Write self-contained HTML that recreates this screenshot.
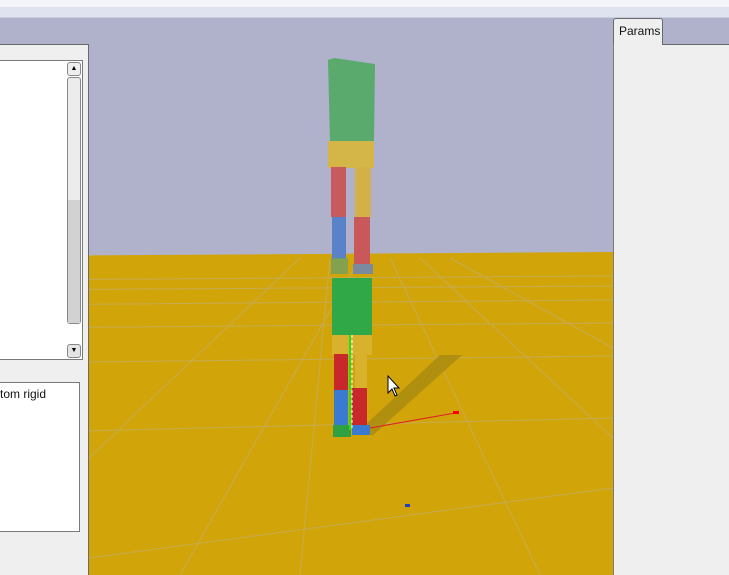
<!DOCTYPE html>
<html><head><style>
body{margin:0;width:729px;height:575px;overflow:hidden;position:relative;background:#b0b2cc;font-family:"Liberation Sans",sans-serif}
div{position:absolute;box-sizing:border-box}
</style></head><body>
<div style="left:0;top:0;width:729px;height:7px;background:#f3f5f9"></div>
<div style="left:0;top:7px;width:729px;height:11px;background:#dfe3ef;border-bottom:1px solid #c9cede"></div>
<svg style="position:absolute;left:0;top:18px" width="613" height="557">
<polygon points="0,238 613,234 613,557 0,557" fill="#d1a50a"/>
<g stroke="#c2ad70" stroke-width="1" opacity="0.7" fill="none">
<line x1="0" y1="262" x2="613" y2="258"/>
<line x1="0" y1="272" x2="613" y2="268"/>
<line x1="0" y1="287" x2="613" y2="282"/>
<line x1="0" y1="310" x2="613" y2="305"/>
<line x1="0" y1="345" x2="613" y2="338"/>
<line x1="0" y1="415" x2="613" y2="400"/>
<line x1="89" y1="540" x2="613" y2="470"/>
<line x1="330" y1="240" x2="300" y2="557"/>
<line x1="360" y1="240" x2="180" y2="557"/>
<line x1="390" y1="240" x2="540" y2="557"/>
<line x1="420" y1="240" x2="613" y2="420"/>
<line x1="300" y1="240" x2="89" y2="440"/>
<line x1="450" y1="240" x2="613" y2="330"/>
</g>
<polygon points="362,410 372,418 462,337 440,337" fill="#a88a10" opacity="0.8"/>
</svg>
<svg style="position:absolute;left:0;top:0" width="613" height="575">
<polygon points="328,60 334,58 375,64 374,141 330,141" fill="#5aaa6e"/>
<rect x="328" y="141" width="46" height="27" fill="#d4b548"/>
<rect x="331" y="167" width="15" height="50" fill="#c85a5e"/>
<rect x="355" y="167" width="16" height="50" fill="#d4b048"/>
<rect x="332" y="217" width="14" height="42" fill="#5a82c8"/>
<rect x="354" y="217" width="16" height="48" fill="#c8585a"/>
<rect x="331" y="258" width="17" height="16" fill="#70a060" opacity="0.8"/>
<rect x="353" y="264" width="20" height="10" fill="#7c8aa0"/>
<rect x="332" y="278" width="40" height="57" fill="#30a848"/>
<rect x="332" y="335" width="40" height="20" fill="#d8b22c"/>
<rect x="334" y="354" width="14" height="38" fill="#c8282a"/>
<rect x="355" y="354" width="12" height="38" fill="#d8b22c"/>
<rect x="334" y="390" width="14" height="38" fill="#3a7ad0"/>
<rect x="352" y="388" width="15" height="38" fill="#c8282a"/>
<rect x="333" y="425" width="18" height="12" fill="#30a040"/>
<rect x="352" y="425" width="18" height="10" fill="#3a7ad0"/>
<line x1="350" y1="335" x2="350" y2="430" stroke="#20e020" stroke-width="2"/>
<line x1="352" y1="335" x2="352" y2="430" stroke="#fff" stroke-width="1" stroke-dasharray="3,2"/>
<line x1="370" y1="428" x2="455" y2="413" stroke="#e02020" stroke-width="1"/>
<rect x="453" y="411" width="6" height="3" fill="#f00"/>
<rect x="405" y="504" width="5" height="3" fill="#2040c0"/>
<path d="M388,376 L388,393 L392,389 L395,396 L397,395 L394,388 L399,388 Z" fill="#fff" stroke="#000" stroke-width="1"/>
</svg>
<div style="left:0;top:44px;width:89px;height:531px;background:#efefef;border-right:1px solid #6a6a6a;border-top:1px solid #6a6a6a"></div>
<div style="left:0;top:60px;width:83px;height:300px;background:#fff;border:1px solid #7a7a7a;border-left:none"></div>
<div style="left:67px;top:62px;width:14px;height:14px;border:1px solid #888;border-radius:3px;background:#eee;font-size:7px;text-align:center;line-height:12px">▲</div>
<div style="left:67px;top:77px;width:14px;height:247px;border:1px solid #888;border-radius:3px;background:#ececec"></div>
<div style="left:68px;top:200px;width:12px;height:123px;background:#d2d2d2"></div>
<div style="left:67px;top:344px;width:14px;height:14px;border:1px solid #888;border-radius:3px;background:#e4e4e4;font-size:7px;text-align:center;line-height:12px">▼</div>
<div style="left:0;top:382px;width:80px;height:150px;background:#fff;border:1px solid #7a7a7a;border-left:none;font-size:12px;padding:4px 0 0 0;color:#111">tom rigid</div>
<div style="left:613px;top:44px;width:116px;height:531px;background:#efefef;border-left:1px solid #7a7a7a"></div>
<div style="left:662px;top:44px;width:67px;height:1px;background:#6a6a6a"></div>
<div style="left:613px;top:18px;width:50px;height:27px;background:#efefef;border:1px solid #6a6a6a;border-bottom:none;border-radius:3px 3px 0 0;font-size:12px;padding:5px 0 0 5px;color:#111">Params</div>
</body></html>
